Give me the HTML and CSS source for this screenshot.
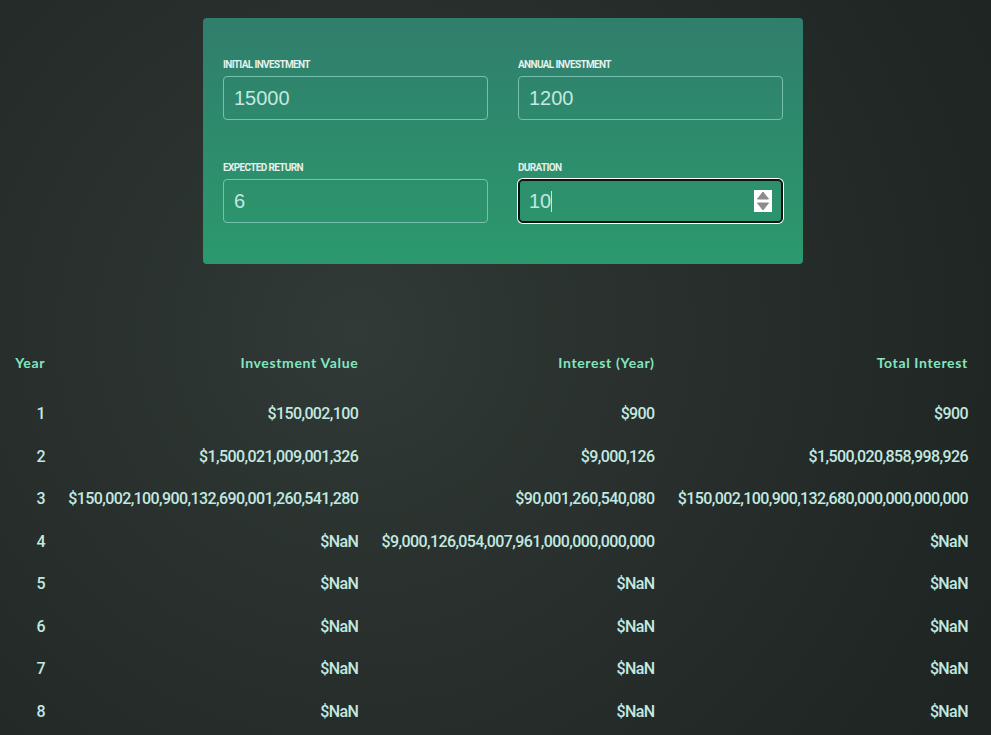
FILE: index.html
```html
<!DOCTYPE html>
<html lang="en">
<head>
<meta charset="utf-8">
<title>Investment Calculator</title>
<link rel="stylesheet" href="styles.css">
</head>
<body>
<section class="card">
  <div class="row">
    <label class="group">
      <span class="label">Initial Investment</span>
      <input class="field" type="text" value="15000" readonly>
    </label>
    <label class="group">
      <span class="label">Annual Investment</span>
      <input class="field" type="text" value="1200" readonly>
    </label>
  </div>
  <div class="row">
    <label class="group">
      <span class="label">Expected Return</span>
      <input class="field" type="text" value="6" readonly>
    </label>
    <div class="group">
      <span class="label">Duration</span>
      <div class="field focused">
        <span>10</span><span class="caret"></span>
        <svg class="spin" width="18" height="22" viewBox="0 0 18 22">
          <rect width="18" height="22" fill="#ffffff"/>
          <path d="M9 2 L14.5 9 L3.5 9 Z" fill="#8c8c8c" stroke="#8c8c8c" stroke-width="1" stroke-linejoin="round"/>
          <path d="M3.5 13 L14.5 13 L9 20 Z" fill="#8c8c8c" stroke="#8c8c8c" stroke-width="1" stroke-linejoin="round"/>
        </svg>
      </div>
    </div>
  </div>
</section>

<table class="results">
  <colgroup>
    <col class="c-year"><col class="c-value"><col class="c-int"><col class="c-total"><col class="c-cap">
  </colgroup>
  <thead>
    <tr><th>Year</th><th>Investment Value</th><th>Interest (Year)</th><th>Total Interest</th><th class="wrap">Invested Capital</th></tr>
  </thead>
  <tbody>
    <tr><td>1</td><td>$150,002,100</td><td>$900</td><td>$900</td><td>$150,001,200</td></tr>
    <tr><td>2</td><td>$1,500,021,009,001,326</td><td>$9,000,126</td><td>$1,500,020,858,998,926</td><td>$150,002,400</td></tr>
    <tr><td>3</td><td>$150,002,100,900,132,690,001,260,541,280</td><td>$90,001,260,540,080</td><td>$150,002,100,900,132,680,000,000,000,000</td><td>$0</td></tr>
    <tr><td>4</td><td>$NaN</td><td>$9,000,126,054,007,961,000,000,000,000</td><td>$NaN</td><td>$NaN</td></tr>
    <tr><td>5</td><td>$NaN</td><td>$NaN</td><td>$NaN</td><td>$NaN</td></tr>
    <tr><td>6</td><td>$NaN</td><td>$NaN</td><td>$NaN</td><td>$NaN</td></tr>
    <tr><td>7</td><td>$NaN</td><td>$NaN</td><td>$NaN</td><td>$NaN</td></tr>
    <tr><td>8</td><td>$NaN</td><td>$NaN</td><td>$NaN</td><td>$NaN</td></tr>
    <tr><td>9</td><td>$NaN</td><td>$NaN</td><td>$NaN</td><td>$NaN</td></tr>
    <tr><td>10</td><td>$NaN</td><td>$NaN</td><td>$NaN</td><td>$NaN</td></tr>
  </tbody>
</table>
</body>
</html>
```

FILE: styles.css
```css
html {
  overflow: hidden;
  min-height: 100%;
  background: radial-gradient(circle at 36% 40%, #303a36 0, #29302d 35%, #202624 80%, #1e2422 100%);
}

body {
  margin: 0;
  overflow: hidden;
  min-height: 100vh;
  font-family: "Roboto", "Liberation Sans", sans-serif;
  color: #e1eeeb;
}

.card {
  box-sizing: border-box;
  width: 600px;
  margin: 18px 0 0 203px;
  padding: 41px 20px 41px;
  border-radius: 4px;
  background: linear-gradient(180deg, #307e6c, #2b996d);
  display: flex;
  flex-direction: column;
  gap: 42px;
}

.row {
  display: flex;
  gap: 30px;
}

.group {
  flex: 1;
  min-width: 0;
  display: flex;
  flex-direction: column;
  gap: 5px;
}

.label {
  font-family: "Roboto", sans-serif;
  font-weight: 700;
  font-size: 10px;
  line-height: 12px;
  letter-spacing: -0.65px;
  text-transform: uppercase;
  color: #e4f1ed;
}

.field {
  box-sizing: border-box;
  width: 100%;
  height: 44px;
  margin: 0;
  padding: 0 10px;
  border: 1px solid #76c0ae;
  border-radius: 4px;
  background: transparent;
  font-family: "Liberation Sans", Arial, sans-serif;
  font-size: 20px;
  color: #c2e9e0;
  outline: none;
}

.focused {
  display: flex;
  align-items: center;
  border-color: #101010;
  border-radius: 5px;
  box-shadow: inset 0 0 0 1px #101010, 0 0 0 1px #ffffff;
}

.caret {
  width: 1px;
  height: 21px;
  background: #c2e9e0;
}

.spin {
  margin-left: auto;
  display: block;
}

.results {
  margin: 66px 0 0 -9px;
  border-spacing: 23px;
  table-layout: fixed;
  width: 1109px;
  text-align: right;
  white-space: nowrap;
}

.c-year { width: 31px; }
.c-value { width: 290px; }
.c-int { width: 273px; }
.c-total { width: 290px; }
.c-cap { width: 86px; }

.results th {
  padding: 0 0 8.5px;
  vertical-align: top;
  font-family: "Lato", sans-serif;
  font-weight: 700;
  font-size: 14px;
  line-height: 19.5px;
  letter-spacing: 0.65px;
  color: #83e6c0;
}

.results th.wrap {
  white-space: normal;
  line-height: 14px;
  padding: 0;
}

.results td {
  padding: 0;
  font-family: "Roboto", sans-serif;
  font-weight: 500;
  font-size: 16px;
  line-height: 19.5px;
  letter-spacing: -0.6px;
  color: #c2e9e0;
}
```
